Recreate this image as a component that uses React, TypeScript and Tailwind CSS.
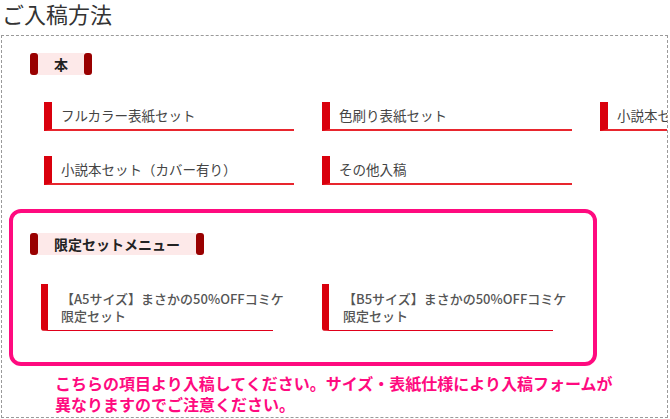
const FONT = { fontFamily: '"Noto Sans CJK JP", "Noto Sans", sans-serif' };

const BOOK_ITEMS = [
  "フルカラー表紙セット",
  "色刷り表紙セット",
  "小説本セット（カバー無し）",
  "小説本セット（カバー有り）",
  "その他入稿",
];

const LIMITED_ITEMS = [
  { size: "【A5サイズ】", width: "w-[232px]", pad: "pl-[13px]" },
  { size: "【B5サイズ】", width: "w-[231px]", pad: "pl-[14px]" },
];

function SectionHeading({ label }: { label: string }) {
  return (
    <div className="flex h-[22px] w-fit">
      <div className="w-[8px] rounded-[3px] bg-[#990000]" />
      <div className="flex items-center bg-[#fde9e9] px-[16px] text-[14px] font-bold leading-none text-[#222]">
        {label}
      </div>
      <div className="w-[8px] rounded-[3px] bg-[#990000]" />
    </div>
  );
}

export default function App() {
  return (
    <div className="h-[419px] w-[670px] overflow-hidden bg-white" style={FONT}>
      <h1 className="h-[35px] pl-[2px] text-[22px] font-normal leading-[26px] text-[#333]">
        ご入稿方法
      </h1>

      <div className="ml-[1px] h-[383px] w-[667px] overflow-hidden border border-dashed border-[#9a9a9a]">
        <div className="ml-[28px] mt-[17px]">
          <SectionHeading label="本" />
        </div>

        <div className="ml-[42px] mt-[27px] grid grid-cols-[250px_250px_250px] gap-x-[28px] gap-y-[25px]">
          {BOOK_ITEMS.map((item) => (
            <div
              key={item}
              className="flex h-[29px] items-center whitespace-nowrap border-b-2 border-l-[8px] border-b-[#e8262e] border-l-[#d9000d] pl-[9px] text-[13.5px] text-[#444]"
            >
              {item}
            </div>
          ))}
        </div>

        <div className="ml-[7px] mt-[24px] h-[157px] w-[588px] rounded-[12px] border-4 border-[#ff0a7f] pl-[17px] pt-[20px]">
          <SectionHeading label="限定セットメニュー" />
          <div className="ml-[11px] mt-[29px] flex gap-[49px]">
            {LIMITED_ITEMS.map((item) => (
              <div
                key={item.size}
                className={`flex h-[47px] items-center rounded-bl-[3px] border-b border-l-[7px] border-b-[#e0001a] border-l-[#d9000d] ${item.width} ${item.pad} text-[13px] font-medium leading-[17px] text-[#555]`}
              >
                <span className="whitespace-nowrap">
                  {item.size}まさかの50%OFFコミケ
                  <br />
                  限定セット
                </span>
              </div>
            ))}
          </div>
        </div>

        <p className="ml-[53px] mt-[7px] text-[16px] font-bold leading-[21px] text-[#ff0a7f]">
          こちらの項目より入稿してください。サイズ・表紙仕様により入稿フォームが
          <br />
          異なりますのでご注意ください。
        </p>
      </div>
    </div>
  );
}
